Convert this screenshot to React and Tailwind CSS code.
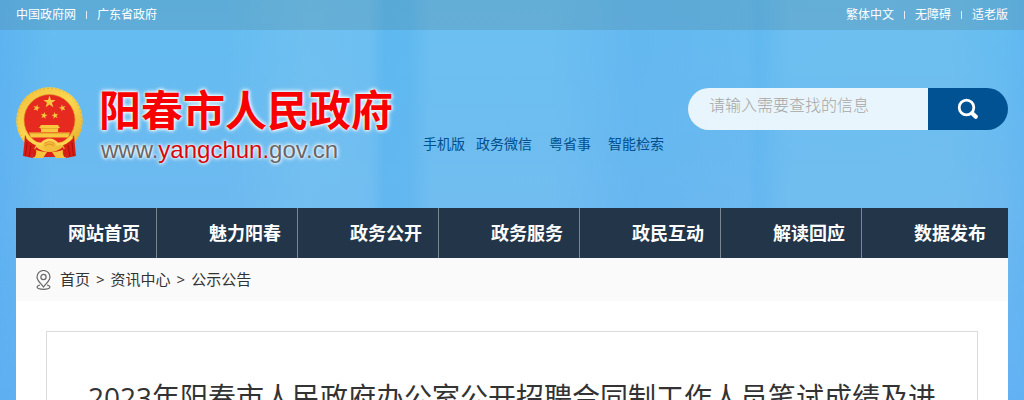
import { useState } from "react";

const leftLinks = ["中国政府网", "广东省政府"];
const rightLinks = ["繁体中文", "无障碍", "适老版"];
const navItems = [
  "网站首页",
  "魅力阳春",
  "政务公开",
  "政务服务",
  "政民互动",
  "解读回应",
  "数据发布",
];
const crumbs = ["首页", "资讯中心", "公示公告"];

const STAR =
  "M0 -1L0.235 -0.324L0.951 -0.309L0.38 0.124L0.588 0.809L0 0.4L-0.588 0.809L-0.38 0.124L-0.951 -0.309L-0.235 -0.324Z";

function Emblem() {
  return (
    <svg viewBox="0 0 67 72" className="h-[72px] w-[67px] shrink-0" aria-hidden="true">
      <defs>
        <linearGradient id="gold" x1="0" y1="0" x2="1" y2="1">
          <stop offset="0" stopColor="#f0c03c" />
          <stop offset="0.5" stopColor="#fdd751" />
          <stop offset="1" stopColor="#e3a928" />
        </linearGradient>
      </defs>
      <path d="M14 52H53L50 70H17Z" fill="#d51b14" />
      <path
        d="M33.500 0.200A33.300 33.300 0 0 1 57 57L52 60Q43 66 33.500 66Q24 66 15 60L10 57A33.300 33.300 0 0 1 33.500 0.200Z"
        fill="url(#gold)"
      />
      <circle cx="33.500" cy="33.500" r="32" fill="none" stroke="#e0ab30" strokeWidth="0.8" strokeDasharray="2 2" />
      <circle cx="33.500" cy="33" r="25.500" fill="#e62a20" stroke="#d99a20" strokeWidth="0.6" />
      <g fill="#f8c93f">
        <path d={STAR} transform="translate(33.500 15) scale(6.500)" />
        <path d={STAR} transform="translate(20.500 21) rotate(15) scale(3.600)" />
        <path d={STAR} transform="translate(46.500 21) rotate(-15) scale(3.600)" />
        <path d={STAR} transform="translate(28 28.500) rotate(10) scale(3.600)" />
        <path d={STAR} transform="translate(39 28.500) rotate(-10) scale(3.600)" />
        <path d="M25 38H42L44 41H23Z" />
        <path d="M25 41H42V45H25Z" />
        <path d="M13 45.500H54L52 50.500H15Z" />
      </g>
      <path d="M24 41.500H43M14 46.500H53" stroke="#dc9a24" strokeWidth="0.6" />
      {/* ribbon below the gate */}
      <path d="M9 48Q12 55 20 58Q16 65 17 71L7 69Q8 60 9 48Z" fill="#d81e17" />
      <path d="M58 48Q55 55 47 58Q51 65 50 71L60 69Q59 60 58 48Z" fill="#d81e17" />
      <path d="M11 55L9.500 69M15 58L13 70M56 55L57.500 69M52 58L54 70" stroke="#a60f0a" strokeWidth="0.9" />
      <path d="M20 60Q26 65 33.500 65Q41 65 47 60L49 66L44 70H23L18 66Z" fill="#dc2018" />
      <path
        d="M11 50Q18 58 26 57Q29 53 33.500 53Q38 53 41 57Q49 58 56 50"
        fill="none"
        stroke="#fbd450"
        strokeWidth="3"
      />
      <path d="M27 58Q33.500 51 40 58Q38 64 33.500 64Q29 64 27 58Z" fill="#f4be3c" />
      <path d="M29 59Q33.500 55 38 59" fill="none" stroke="#d88f20" strokeWidth="1" />
      <path d="M20 63Q26 65 31 65L27 71H18Q21 67 20 63Z" fill="#f5c33e" />
      <path d="M47 63Q41 65 36 65L40 71H49Q46 67 47 63Z" fill="#f5c33e" />
    </svg>
  );
}

function LinkList({ links }) {
  return (
    <ul className="flex items-center">
      {links.map((link, i) => (
        <li key={link} className="flex items-center">
          {i > 0 && <span className="mx-2.5 h-2 w-px bg-white/80" />}
          <a href="#">{link}</a>
        </li>
      ))}
    </ul>
  );
}

function SearchBox() {
  const [keyword, setKeyword] = useState("");

  return (
    <form
      className="mt-[58px] flex h-[42px] w-80 overflow-hidden rounded-full"
      onSubmit={(e) => e.preventDefault()}
    >
      <input
        type="text"
        aria-label="请输入需要查找的信息"
        placeholder="请输入需要查找的信息"
        value={keyword}
        onChange={(e) => setKeyword(e.target.value)}
        className="min-w-0 flex-1 bg-white/85 pr-2 pb-2 pl-[21px] text-base text-[#333] outline-none placeholder:font-light placeholder:text-[#a6a6a6]"
      />
      <button
        type="submit"
        aria-label="搜索"
        className="flex w-20 items-center justify-center bg-[#005293] text-white"
      >
        <svg viewBox="0 0 22 22" className="size-[22px]" fill="none" stroke="currentColor">
          <circle cx="9.500" cy="9.500" r="7.300" strokeWidth="2.800" />
          <path d="M15.200 15.200L18.800 18.800" strokeWidth="4.200" strokeLinecap="round" />
        </svg>
      </button>
    </form>
  );
}

export default function App() {
  return (
    <div className="h-screen overflow-hidden bg-[linear-gradient(90deg,#58aef0a0_0%,transparent_5%,transparent_22%,#7ac4f280_30%,#78c3f270_36%,#58b5f080_37.5%,#5ab6f080_40%,#78c3f160_42%,#78c3f160_54%,#62b3f070_62%,#6ab8f040_73%,#5cb4f070_74%,#76c2f070_77%,#74c1ee80_93%,transparent_98%,#5fb3f280_100%),linear-gradient(180deg,#63bdf0_0px,#67bbf0_100px,#6db9f0_208px,#64b1f4_400px)] font-['Open_Sans','Noto_Sans_CJK_SC',sans-serif]">
      <div className="flex h-[30px] items-center justify-between bg-[#4b7a8c]/25 px-4 text-xs text-white">
        <LinkList links={leftLinks} />
        <LinkList links={rightLinks} />
      </div>

      <div className="px-4">
        <header className="flex h-[178px] items-start">
          <a href="#" className="mt-[57px] flex" aria-label="阳春市人民政府">
            <Emblem />
            <span className="ml-4 flex flex-col [text-shadow:0_0_2px_#fff,0_0_4px_#fff,0_0_5px_#fff]">
              <span className="text-[42px] leading-[46px] font-bold text-[#f80000]">
                阳春市人民政府
              </span>
              <span className="pl-0.5 font-['Liberation_Sans',sans-serif] text-2xl leading-[34px] text-[#666]">
                www.<span className="text-[#d8060c]">yangchun.</span>gov.cn
              </span>
            </span>
          </a>
          <div className="mt-[104px] ml-[30px] flex flex-1 text-sm text-[#004f8e]">
            <a href="#" className="mr-[11px]">手机版</a>
            <a href="#" className="mr-[17px]">政务微信</a>
            <a href="#" className="mr-[17px]">粤省事</a>
            <a href="#">智能检索</a>
          </div>
          <SearchBox />
        </header>

        <nav className="flex bg-[#223549] text-lg leading-[50px] font-bold text-white">
          {navItems.map((item) => (
            <a
              key={item}
              href="#"
              className="border-r border-[#7a8692] pr-4 pl-13 last:border-r-0"
            >
              {item}
            </a>
          ))}
        </nav>

        <main className="min-h-[142px] bg-white">
          <div className="flex h-[43px] items-center bg-[#fafafa] pl-5 text-[15px] text-[#333]">
            <svg
              viewBox="0 0 15 20"
              className="mr-[9px] h-5 w-[15px]"
              fill="none"
              stroke="#666"
              strokeWidth="1.200"
              aria-hidden="true"
            >
              <path d="M7.500 17C5 13.500 1 10.800 1 7A6.500 6.500 0 0 1 14 7C14 10.800 10 13.500 7.500 17Z" />
              <circle cx="7.500" cy="7" r="2.600" />
              <path d="M4 15C-0.500 16 0 19.300 7.500 19.300S15.500 16 11 15" />
            </svg>
            {crumbs.map((crumb, i) => (
              <span key={crumb}>
                {i > 0 && <span className="mx-1.5">&gt;</span>}
                <a href="#">{crumb}</a>
              </span>
            ))}
          </div>
          <article className="mx-[30px] mt-[30px] border border-[#dcdcdc] px-[30px] pt-[45px]">
            <h1 className="text-center text-[28px] leading-10 whitespace-nowrap text-[#333]">
              2023年阳春市人民政府办公室公开招聘合同制工作人员笔试成绩及进
            </h1>
          </article>
        </main>
      </div>
    </div>
  );
}
